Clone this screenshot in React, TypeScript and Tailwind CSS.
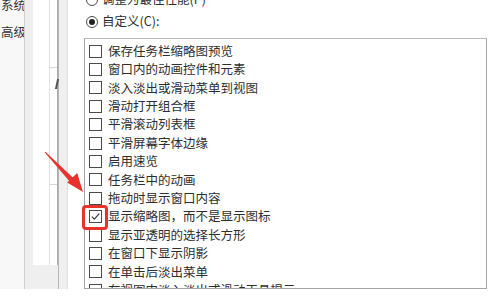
import React from "react";

const items = [
  "保存任务栏缩略图预览",
  "窗口内的动画控件和元素",
  "淡入淡出或滑动菜单到视图",
  "滑动打开组合框",
  "平滑滚动列表框",
  "平滑屏幕字体边缘",
  "启用速览",
  "任务栏中的动画",
  "拖动时显示窗口内容",
  "显示缩略图，而不是显示图标",
  "显示亚透明的选择长方形",
  "在窗口下显示阴影",
  "在单击后淡出菜单",
  "在视图中淡入淡出或滑动工具提示",
];

function Checkbox({ checked }: { checked?: boolean }) {
  return (
    <span className="w-[13px] h-[13px] border border-[#4a4a4a] bg-white flex items-center justify-center shrink-0">
      {checked && (
        <svg width="11" height="11" viewBox="0 0 11 11">
          <path d="M1.8 5.6 L4.3 8.1 L9.3 2.6" fill="none" stroke="#3a3a3a" strokeWidth="1.2" />
        </svg>
      )}
    </span>
  );
}

function Radio({ checked }: { checked?: boolean }) {
  return (
    <span className="w-[12px] h-[12px] rounded-full border border-[#4a4a4a] bg-white flex items-center justify-center shrink-0">
      {checked && <span className="w-[6px] h-[6px] rounded-full bg-[#222]" />}
    </span>
  );
}

function RedArrow() {
  return (
    <svg className="absolute left-0 top-0 pointer-events-none" width="501" height="304">
      <polygon points="44.6,152.3 45.4,151.7 75.5,180.0 71.6,183.8" fill="#e8322b" />
      <polygon points="83,192 67.2,182.4 77.2,173.0" fill="#e8322b" />
    </svg>
  );
}

export default function App() {
  return (
    <div
      className="relative w-[501px] h-[304px] bg-white overflow-hidden text-[#2e2e2e]"
      style={{ fontFamily: '"Noto Sans CJK SC", "Noto Sans", sans-serif' }}
    >
      <div className="flex h-[289px] overflow-hidden">
        {/* sidebar */}
        <div className="w-[25px] shrink-0 bg-[#f8f8f8] border-r border-[#cfcfcf] overflow-hidden">
          <div className="flex flex-col mt-[-9px] text-[12.5px] leading-[27px] whitespace-nowrap text-[#333]">
            <span className="pl-[1px]">系统</span>
            <span className="pl-[1px]">高级</span>
          </div>
        </div>

        {/* behind dialog */}
        <div className="w-[8px] shrink-0 bg-[#efefef]" />
        <div className="w-[25px] shrink-0 flex flex-col bg-[#efefef]">
          <div className="h-[265px] bg-white flex border-r border-[#a9a9a9]">
            <div className="w-[16px] shrink-0" />
            <div className="w-[8px] shrink-0 flex flex-col border-l border-[#e2e2e2]">
              <div className="h-[67px]" />
              <div className="h-[118px] border-y border-[#d6d6d6] flex flex-col">
                <span className="ml-[6px] mt-[11px] w-[1.5px] h-[10px] bg-[#555] skew-x-[-12deg]" />
              </div>
            </div>
          </div>
        </div>
        <div className="w-[10px] shrink-0 bg-[#efefef] border-l border-[#b5b5b5] border-r border-r-[#e0e0e0]" />

        {/* main */}
        <div className="flex-1 flex flex-col pl-[16px] pr-[14px]">
          <div className="flex flex-col mt-[-11.5px] text-[12.5px]">
            <div className="h-[22px] flex items-center gap-[4px] pl-[2px]">
              <Radio />
              <span>调整为最佳性能(P)</span>
            </div>
            <div className="h-[22px] flex items-center gap-[4px] pl-[2px]">
              <Radio checked />
              <span>自定义(C):</span>
            </div>
          </div>
          <div className="mt-[5.5px] flex-1 border border-[#a4a4a4] border-t-[#b8b8b8] pt-[3px] pl-[4px] overflow-hidden">
            {items.map((t, i) => (
              <div key={t} className="h-[18.4px] flex items-center gap-[6px] text-[12.5px] whitespace-nowrap">
                <Checkbox checked={i === 9} />
                <span>{t}</span>
              </div>
            ))}
          </div>
        </div>
      </div>

      {/* annotations */}
      <div className="absolute left-[82px] top-[205px] w-[26px] h-[25px] border-[3px] border-[#e8322b] rounded-[4px]" />
      <RedArrow />
    </div>
  );
}
